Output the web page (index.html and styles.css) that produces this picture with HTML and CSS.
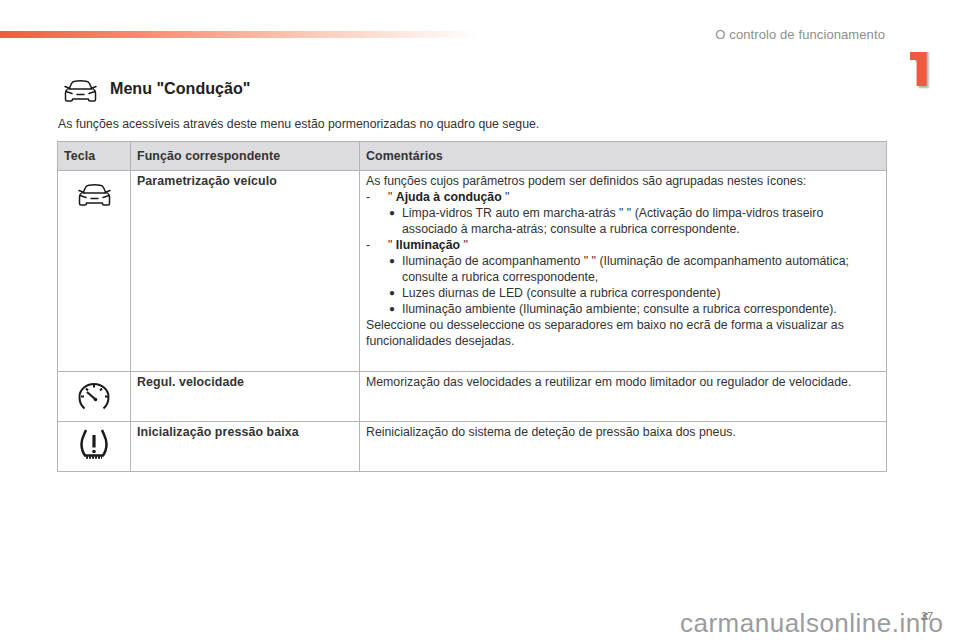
FILE: index.html
```html
<!DOCTYPE html>
<html lang="pt">
<head>
<meta charset="utf-8">
<title>Menu "Condução"</title>
<link rel="stylesheet" href="styles.css">
</head>
<body>
<div class="page">
  <header class="top">
    <div class="bar"></div>
    <div class="chapter">O controlo de funcionamento</div>
  </header>
  <div class="chapter-num">1</div>
  <main class="content">
    <div class="title-row">
      <svg class="car" viewBox="0 0 33 22"><use href="#car-icon"/></svg>
      <h1>Menu "Condução"</h1>
    </div>
    <p class="intro">As funções acessíveis através deste menu estão pormenorizadas no quadro que segue.</p>
    <table class="tbl">
      <colgroup><col class="c1"><col class="c2"><col class="c3"></colgroup>
      <thead>
        <tr><th>Tecla</th><th>Função correspondente</th><th>Comentários</th></tr>
      </thead>
      <tbody>
        <tr class="r1">
          <td class="ic"><svg class="car" viewBox="0 0 33 22"><use href="#car-icon"/></svg></td>
          <td class="b">Parametrização veículo</td>
          <td>
            <div>As funções cujos parâmetros podem ser definidos são agrupadas nestes ícones:</div>
            <div class="dash"><span class="mark">-</span><span>" <b>Ajuda à condução</b> "</span></div>
            <div class="dot"><span class="mark">●</span><span>Limpa-vidros TR auto em marcha-atrás " " (Activação do limpa-vidros traseiro<br>associado à marcha-atrás; consulte a rubrica correspondente.</span></div>
            <div class="dash"><span class="mark">-</span><span>" <b>Iluminação</b> "</span></div>
            <div class="dot"><span class="mark">●</span><span>Iluminação de acompanhamento " " (Iluminação de acompanhamento automática;<br>consulte a rubrica corresponodente,</span></div>
            <div class="dot"><span class="mark">●</span><span>Luzes diurnas de LED (consulte a rubrica correspondente)</span></div>
            <div class="dot"><span class="mark">●</span><span>Iluminação ambiente (Iluminação ambiente; consulte a rubrica correspondente).</span></div>
            <div>Seleccione ou desseleccione os separadores em baixo no ecrã de forma a visualizar as<br>funcionalidades desejadas.</div>
          </td>
        </tr>
        <tr class="r2">
          <td class="ic"><svg class="gauge" viewBox="0 0 32 27" fill="none" stroke="#1a1a1a" stroke-width="2"><path d="M6.500 25.500 A15 15 0 0 1 1.500 14 A14.500 13 0 0 1 30.500 14 A15 15 0 0 1 25.500 25.500"/><path d="M3 13.500h3M16 1.500v3M8 5.500l2 2M27 13.500h3M24 5.500l-2 2"/><path d="M9 9l8 7" stroke-width="2.200"/><circle cx="17.500" cy="16.500" r="1.800" fill="#1a1a1a" stroke="none"/></svg></td>
          <td class="b">Regul. velocidade</td>
          <td>Memorização das velocidades a reutilizar em modo limitador ou regulador de velocidade.</td>
        </tr>
        <tr class="r3">
          <td class="ic"><svg class="tire" viewBox="0 0 28 30" fill="none" stroke="#1a1a1a"><path d="M6 1 C4 6 1.500 9 1.500 15 C1.500 19 2.500 23 5 26.500 H23 C25.500 23 26.500 19 26.500 15 C26.500 9 24 6 22 1" stroke-width="2.500"/><path d="M14 6v12.500" stroke-width="3.200"/><circle cx="14" cy="22.500" r="1.800" fill="#1a1a1a" stroke="none"/><path d="M6 28.500h16" stroke-width="2.500" stroke-dasharray="2 1"/></svg></td>
          <td class="b">Inicialização pressão baixa</td>
          <td>Reinicialização do sistema de deteção de pressão baixa dos pneus.</td>
        </tr>
      </tbody>
    </table>
  </main>
  <div class="watermark">carmanualsonline.info</div>
  <div class="page-num">37</div>
</div>
<svg class="defs" width="0" height="0">
  <symbol id="car-icon" viewBox="0 0 33 22">
    <g fill="none" stroke="#1a1a1a" stroke-width="1.500" stroke-linejoin="round" stroke-linecap="round">
      <path d="M5 9 L7.500 3.500 Q8.500 1.500 11 1.200 Q16.500 .5 22 1.200 Q24.500 1.500 25.500 3.500 L28 9 H5"/>
      <path d="M1 6.500 L6 8.500 M32 6.500 L27 8.500"/>
      <path d="M3.500 9 C2 10 1.500 11 1.500 13 V19.500 Q1.500 21 3 21 H7 Q8.500 21 8.500 19 H24.500 Q24.500 21 26 21 H30 Q31.500 21 31.500 19.500 V13 C31.500 11 31 10 29.500 9"/>
      <path d="M2 11.500 L8 13.500 M31 11.500 L25 13.500"/>
      <path d="M13 14.500 H20"/>
    </g>
  </symbol>
</svg>
</body>
</html>
```
FILE: styles.css
```css
* { box-sizing: border-box; }
html, body { margin: 0; padding: 0; background: #fff; }
body { font-family: "Liberation Sans", Arial, sans-serif; color: #222; }
.page { position: relative; width: 960px; height: 640px; overflow: hidden; }
.defs { position: absolute; }

.top { display: flex; height: 69px; }
.bar { flex: 0 0 480px; height: 7px; margin-top: 31px; background: linear-gradient(90deg, #f25a3e 0%, #f6977c 35%, #fbd3c3 70%, #fff 100%); }
.chapter { margin-left: auto; margin-right: 75px; margin-top: 27px; font-size: 13px; line-height: 15px; letter-spacing: .1px; color: #8e8e8e; }

.chapter-num { position: absolute; left: 906px; top: 38px; width: 30px; height: 60px; font-family: Inter, "Liberation Sans", sans-serif; font-weight: 900; font-size: 51px; line-height: 60px; text-align: right; padding-right: 9px; color: #f15a3e; text-shadow: 2px 2px 2px rgba(0,0,0,.3); clip-path: polygon(4px 14px, 30px 14px, 30px 60px, 9px 60px, 9px 22px, 4px 22px); }
.chapter-num::before { content: ""; position: absolute; left: 4px; top: 14px; width: 8px; height: 8px; background: #f15a3e; }

.content { padding-left: 57px; }
.title-row { display: flex; align-items: center; gap: 13px; padding-left: 7px; height: 44px; }
.car { display: block; width: 33px; height: 22px; }
h1 { margin: 0 0 6px; font-size: 16.100px; line-height: 20px; font-weight: 700; color: #222; }
.intro { margin: 4px 0 10px 1px; font-size: 12.300px; line-height: 14px; color: #333; }

.tbl { border-collapse: collapse; table-layout: fixed; width: 829px; font-size: 12.300px; line-height: 16px; color: #333; }
.c1 { width: 73px; } .c2 { width: 229px; } .c3 { width: 527px; }
.tbl th, .tbl td { border: 1.500px solid #b4b4b4; padding: 2px 6px 0; vertical-align: top; text-align: left; }
.tbl th { height: 29px; background: #dcdcde; vertical-align: middle; padding-top: 0; font-size: 12.400px; font-weight: 700; letter-spacing: .1px; color: #333; }
.tbl td.b { font-size: 12.400px; font-weight: 700; letter-spacing: .1px; }
.tbl td b { color: #222; }
.r1 { height: 201px; } .r2, .r3 { height: 50px; }
.ic svg { display: block; margin: 0 auto; }
.tbl .r1 td.ic { padding: 13px 0 0; }
.tbl .r2 td.ic { padding: 11px 0 0; }
.tbl .r3 td.ic { padding: 7px 0 0; }
.gauge { width: 32px; height: 27px; }
.tire { width: 28px; height: 30px; }

.dash, .dot { display: flex; }
.dash .mark { flex: 0 0 22px; }
.dot { padding-left: 23px; }
.dot .mark { flex: 0 0 13px; font-size: 10px; }

.watermark { position: absolute; left: 680px; top: 608px; font-size: 26px; line-height: 30px; letter-spacing: .5px; color: #9c9c9c; }
.page-num { position: absolute; left: 921px; top: 610px; font-size: 11px; line-height: 13px; color: #777; }
```
